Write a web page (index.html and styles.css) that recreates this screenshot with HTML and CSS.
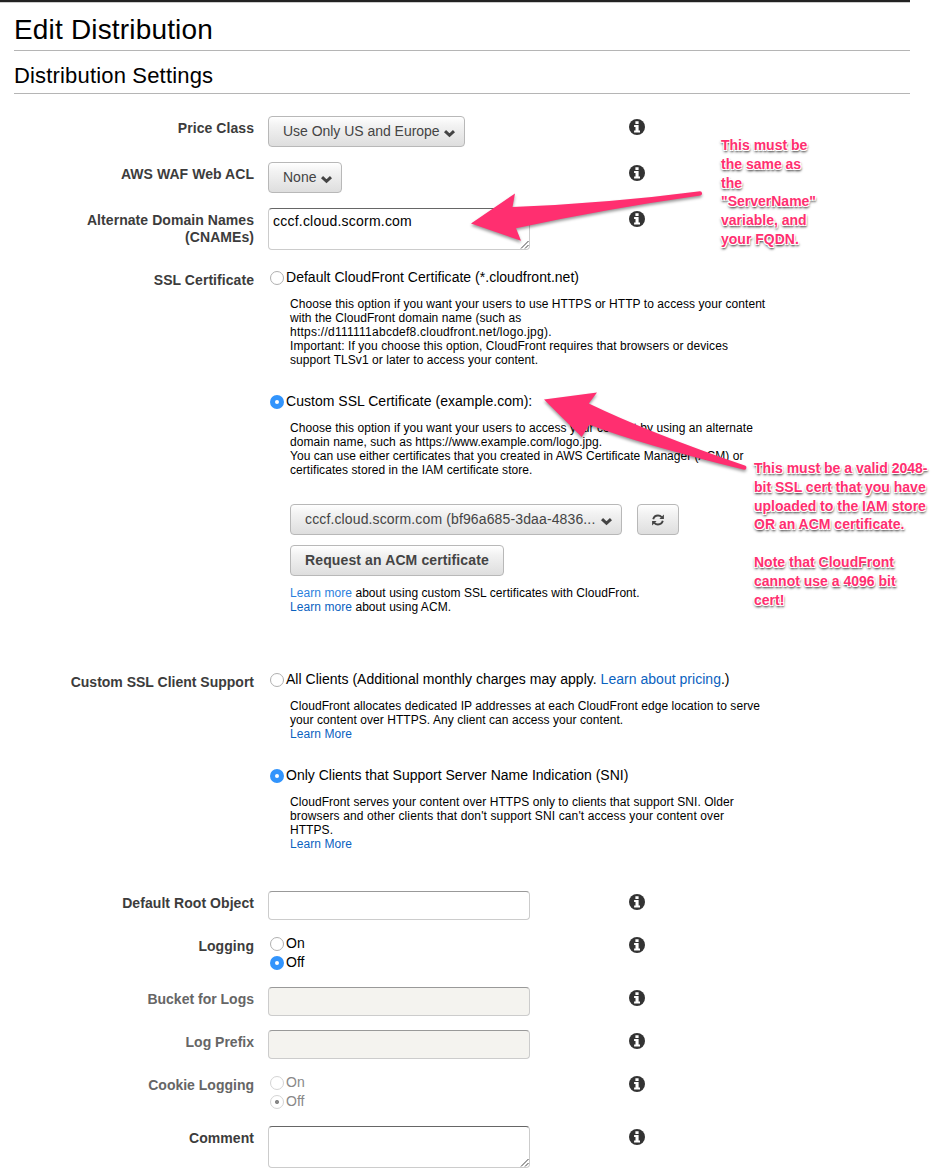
FILE: index.html
```html
<!DOCTYPE html>
<html lang="en">
<head>
<meta charset="utf-8">
<title>Edit Distribution</title>
<link rel="stylesheet" href="styles.css">
</head>
<body>
<svg class="defs" width="0" height="0">
  <symbol id="info" viewBox="0 0 16 16"><circle cx="8" cy="8" r="8" fill="#333"/><path fill="#fff" d="M6.400 2.200h3.200v2.700H6.400zM5.100 5.900h4.500v5.500H11v2.200H5.100v-2.200h1.400V8.100H5.100z"/></symbol>
  <symbol id="chev" viewBox="0 0 10 8"><path d="M.9 1.800 5 5.600l4.100-3.800" fill="none" stroke="#444" stroke-width="2.800"/></symbol>
  <symbol id="grip" viewBox="0 0 9 9"><path d="M1 8.500 8.500 1M5 8.500 8.500 5" fill="none" stroke="#444" stroke-width="1"/></symbol>
</svg>
<main class="page">
  <h1 class="title">Edit Distribution</h1>
  <h2 class="subtitle">Distribution Settings</h2>
  <div class="form">
    <div class="row h46"><div class="label">Price Class</div><div class="field"><div class="btn w197"><span class="tight">Use Only US and Europe</span><svg class="chev"><use href="#chev"/></svg></div></div><svg class="info"><use href="#info"/></svg></div>
    <div class="row h46"><div class="label">AWS WAF Web ACL</div><div class="field"><div class="btn w74"><span>None</span><svg class="chev"><use href="#chev"/></svg></div></div><svg class="info"><use href="#info"/></svg></div>
    <div class="row h60"><div class="label">Alternate Domain Names<br>(CNAMEs)</div><div class="field"><div class="box area"><span class="domain">cccf.cloud.scorm.com</span><svg class="grip"><use href="#grip"/></svg></div></div><svg class="info"><use href="#info"/></svg></div>
    <div class="row h402"><div class="label">SSL Certificate</div><div class="field">
      <div class="opt"><i class="radio"></i><span>Default CloudFront Certificate (*.cloudfront.net)</span></div>
      <p class="desc">Choose this option if you want your users to use HTTPS or HTTP to access your content<br>with the CloudFront domain name (such as<br><span class="url">https://d111111abcdef8.cloudfront.net/logo.jpg).</span><br>Important: If you choose this option, CloudFront requires that browsers or devices<br>support TLSv1 or later to access your content.</p>
      <div class="opt next"><i class="radio on"></i><span>Custom SSL Certificate (example.com):</span></div>
      <p class="desc">Choose this option if you want your users to access your content by using an alternate<br>domain name, such as https://www.example.com/logo.jpg.<br><span class="snug">You can use either certificates that you created in AWS Certificate Manager (ACM) or</span><br>certificates stored in the IAM certificate store.</p>
      <div class="certs"><div class="btn w332"><span class="cert">cccf.cloud.scorm.com (bf96a685-3daa-4836...</span><svg class="chev"><use href="#chev"/></svg></div>
      <div class="btn refresh"><svg width="14" height="12" viewBox="0 0 14 12"><path d="M2.200 5.200C2.900 2.700 4.700 1.500 7 1.500c1.500 0 2.800.6 3.700 1.600M11.800 6.800C11.100 9.300 9.300 10.500 7 10.500c-1.500 0-2.800-.6-3.700-1.600" fill="none" stroke="#444" stroke-width="1.900"/><path d="M12.900.6v4.500H8.400zM1.100 11.400V6.900h4.500z" fill="#444"/></svg></div></div>
      <div class="btn request"><span>Request an ACM certificate</span></div>
      <p class="desc"><a class="light">Learn more</a> about using custom SSL certificates with CloudFront.<br><a>Learn more</a> about using ACM.</p>
    </div></div>
    <div class="row h221"><div class="label plain">Custom SSL Client Support</div><div class="field">
      <div class="opt"><i class="radio"></i><span>All Clients (Additional monthly charges may apply. <a>Learn about pricing</a>.)</span></div>
      <p class="desc">CloudFront allocates dedicated IP addresses at each CloudFront edge location to serve<br>your content over HTTPS. Any client can access your content.<br><a>Learn More</a></p>
      <div class="opt next"><i class="radio on"></i><span class="plain">Only Clients that Support Server Name Indication (SNI)</span></div>
      <p class="desc">CloudFront serves your content over HTTPS only to clients that support SNI. Older<br><span class="loose">browsers and other clients that don't support SNI can't access your content over</span><br>HTTPS.<br><a>Learn More</a></p>
    </div></div>
    <div class="row h43"><div class="label">Default Root Object</div><div class="field"><div class="box"></div></div><svg class="info"><use href="#info"/></svg></div>
    <div class="row h53"><div class="label">Logging</div><div class="field"><div class="opt"><i class="radio"></i><span>On</span></div><div class="opt"><i class="radio on"></i><span>Off</span></div></div><svg class="info"><use href="#info"/></svg></div>
    <div class="row h43 off"><div class="label plain">Bucket for Logs</div><div class="field"><div class="box"></div></div><svg class="info"><use href="#info"/></svg></div>
    <div class="row h43 off"><div class="label plain">Log Prefix</div><div class="field"><div class="box"></div></div><svg class="info"><use href="#info"/></svg></div>
    <div class="row h53 off"><div class="label plain">Cookie Logging</div><div class="field"><div class="opt"><i class="radio"></i><span>On</span></div><div class="opt"><i class="radio dot"></i><span>Off</span></div></div><svg class="info"><use href="#info"/></svg></div>
    <div class="row h46"><div class="label">Comment</div><div class="field"><div class="box area"><svg class="grip"><use href="#grip"/></svg></div></div><svg class="info"><use href="#info"/></svg></div>
  </div>
</main>
<svg class="arrows" width="932" height="620" viewBox="0 0 932 620">
  <path d="M471 223.500 515 193.500 512.500 207Q610 203 700 191.200a2.200 2.200 0 0 1 .5 4.300Q605 209 516 228.200L521 240.800z"/>
  <path d="M544 399.500 597 392.400 588.800 403.500Q650 433 745.500 465.800a2.200 2.200 0 0 1-1.300 4Q640 444 589.500 424.700L581.700 437z"/>
</svg>
<p class="note first">This must be<br>the same as<br>the<br>"ServerName"<br>variable, and<br>your FQDN.</p>
<p class="note second">This must be a valid 2048-<br>bit SSL cert that you have<br>uploaded to the IAM store<br>OR an ACM certificate.<br><br>Note that CloudFront<br>cannot use a 4096 bit<br>cert!</p>
</body>
</html>
```
FILE: styles.css
```css
* { box-sizing: border-box; }
body { margin: 0; position: relative; width: 932px; height: 1174px; overflow: hidden; background: #fff; color: #000; font: 14px/19px "Liberation Sans", Arial, sans-serif; white-space: nowrap; }
.defs { position: absolute; }
.page { width: 910px; border-top: 2px solid #222; box-shadow: inset 0 1px #ccc; padding-left: 14px; }
.title, .subtitle { margin: 0; font-weight: 400; border-bottom: 1px solid #b5b5b5; }
.title { height: 49px; font-size: 28px; line-height: 56px; letter-spacing: .17px; }
.subtitle { height: 43px; font-size: 22px; line-height: 50px; letter-spacing: .17px; }
.form { padding-top: 22px; }
.row { display: grid; grid-template-columns: 240px 361px 16px; column-gap: 14px; align-items: start; }
.field { width: 361px; }
.h46 { height: 46px; } .h60 { height: 60px; } .h402 { height: 402px; } .h221 { height: 221px; } .h43 { height: 43px; } .h53 { height: 53px; }
.label { text-align: right; font-weight: 700; line-height: 17px; padding-top: 4px; color: #3c3c3c; letter-spacing: .06px; }
.info { width: 16px; height: 16px; margin-left: -14px; margin-top: 3px; }
.btn { display: flex; flex: none; align-items: center; justify-content: space-between; height: 31px; padding: 0 9px 0 14px; border: 1px solid #b8b8b8; border-radius: 4px; background: linear-gradient(#fff, #f2f2f2 30%, #dedede); color: #444; }
.w197 { width: 197px; } .w74 { width: 74px; } .w332 { width: 332px; }
.chev { width: 11px; height: 9px; margin-top: 3px; flex: none; }
.box { display: flex; width: 262px; height: 29px; border: 1px solid #ccc; border-top-color: #999; border-radius: 4px; }
.area { height: 42px; padding: 3px 0 0 4px; border-top-color: #666; }
.grip { width: 9px; height: 9px; align-self: flex-end; margin-left: auto; }
.opt { display: flex; align-items: center; height: 19px; padding-left: 2px; gap: 2px; letter-spacing: .025px; }
.opt.next { margin-top: 25px; }
.radio { flex: none; width: 14px; height: 14px; border: 1px solid #b0b0b0; border-radius: 50%; background: #fff; margin-top: 1px; }
.radio.on { border: 5px solid #3294fc; border-color: #3294fc; }
.radio.dot { background: radial-gradient(circle, #888 1.800px, #fff 2.300px); }
.desc { margin: 10px 0 0 22px; font-size: 12px; line-height: 14px; letter-spacing: .062px; }
.plain { letter-spacing: 0; }
.tight { letter-spacing: -.03px; }
.snug { letter-spacing: .025px; }
.loose { letter-spacing: .125px; }
.url { letter-spacing: .25px; }
.domain { letter-spacing: .22px; }
.cert { letter-spacing: .13px; }
a { color: #0a62bf; } a.light { color: #2b7fdd; }
.certs { display: flex; gap: 15px; margin: 27px 0 10px 22px; }
.refresh { width: 42px; padding: 0; justify-content: center; }
.request { width: 214px; margin-left: 22px; font-weight: 700; letter-spacing: .12px; }
.off .label { color: #666; }
.off .box { background: #f4f3ef; }
.off .opt { color: #888; }
.off .radio { border-color: #d4d4d4; }
.arrows { position: absolute; left: 0; top: 0; fill: #ff2f70; filter: drop-shadow(0 2px 1.500px rgba(0,0,0,.4)); }
.note { position: absolute; margin: 0; font-weight: 700; font-size: 14px; line-height: 18.800px; color: #ff2f70; text-shadow: -1px -1px #fff, 1px -1px #fff, -1px 1px #fff, 1px 1px #fff, 0 2px 3px rgba(0,0,0,.65), 1px 2px 2px rgba(0,0,0,.5); }
.first { left: 721px; top: 136px; }
.second { left: 754px; top: 459px; }
```
